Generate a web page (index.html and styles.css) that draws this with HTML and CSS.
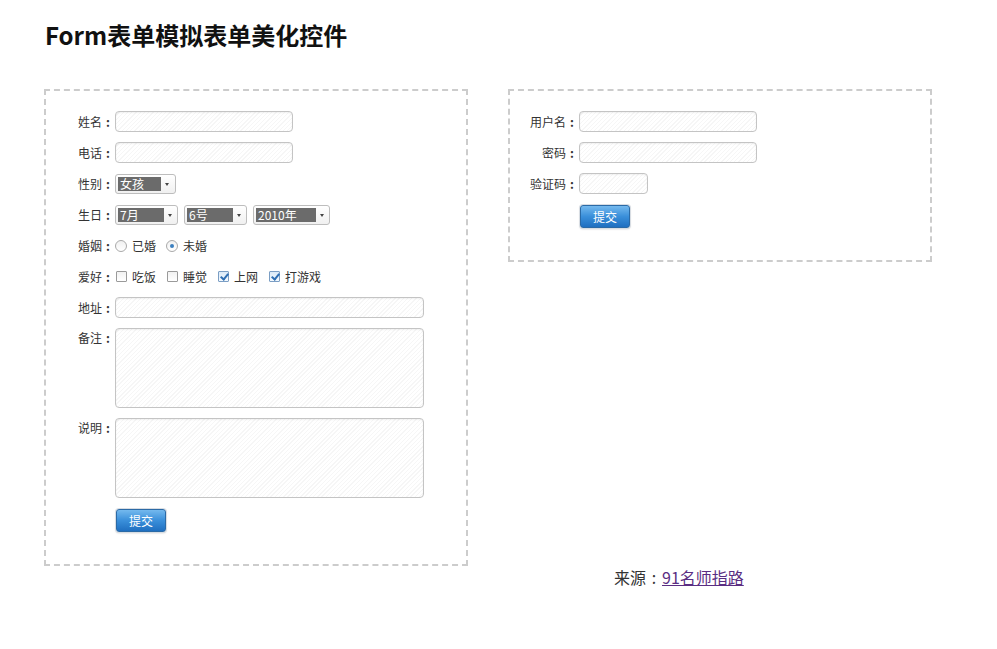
FILE: index.html
```html
<!DOCTYPE html>
<html lang="zh">
<head>
<meta charset="utf-8">
<title>Form表单模拟表单美化控件</title>
<link rel="stylesheet" href="styles.css">
</head>
<body>
<div class="page">
  <h1 class="title">Form表单模拟表单美化控件</h1>
  <div class="boxes">
    <div class="box box-left">
      <div class="row"><span class="lbl">姓名<span class="colon">:</span></span><span class="inp"></span></div>
      <div class="row"><span class="lbl">电话<span class="colon">:</span></span><span class="inp"></span></div>
      <div class="row"><span class="lbl">性别<span class="colon">:</span></span>
        <span class="sel sel-sex"><span class="sel-val">女孩</span><span class="sel-arrow"></span></span>
      </div>
      <div class="row"><span class="lbl">生日<span class="colon">:</span></span>
        <span class="sel sel-m"><span class="sel-val">7月</span><span class="sel-arrow"></span></span>
        <span class="sel sel-d"><span class="sel-val">6号</span><span class="sel-arrow"></span></span>
        <span class="sel sel-y"><span class="sel-val">2010年</span><span class="sel-arrow"></span></span>
      </div>
      <div class="row"><span class="lbl">婚姻<span class="colon">:</span></span>
        <span class="opt"><span class="radio"></span>已婚</span>
        <span class="opt"><span class="radio on"></span>未婚</span>
      </div>
      <div class="row"><span class="lbl">爱好<span class="colon">:</span></span>
        <span class="opt"><span class="chk"></span>吃饭</span>
        <span class="opt"><span class="chk"></span>睡觉</span>
        <span class="opt"><span class="chk on"></span>上网</span>
        <span class="opt"><span class="chk on"></span>打游戏</span>
      </div>
      <div class="row"><span class="lbl">地址<span class="colon">:</span></span><span class="inp inp-wide"></span></div>
      <div class="row row-top"><span class="lbl">备注<span class="colon">:</span></span><span class="inp area"></span></div>
      <div class="row row-top"><span class="lbl">说明<span class="colon">:</span></span><span class="inp area"></span></div>
      <div class="row row-btn"><span class="btn">提交</span></div>
    </div>
    <div class="box box-right">
      <div class="row"><span class="lbl">用户名<span class="colon">:</span></span><span class="inp"></span></div>
      <div class="row"><span class="lbl">密码<span class="colon">:</span></span><span class="inp"></span></div>
      <div class="row"><span class="lbl">验证码<span class="colon">:</span></span><span class="inp inp-short"></span></div>
      <div class="row row-btn"><span class="btn">提交</span></div>
    </div>
  </div>
  <div class="source">来源<span class="colon colon-lg">:</span><a href="#" class="src-link">91名师指路</a></div>
</div>
</body>
</html>
```
FILE: styles.css
```css
html, body {
  margin: 0;
  padding: 0;
  background: #fff;
}
body {
  font-family: "Noto Sans CJK SC", "Noto Sans", "Liberation Sans", sans-serif;
  color: #333;
}
.page {
  padding-left: 44px;
}
.title {
  margin: 18px 0 0 1px;
  font-size: 24px;
  line-height: 34px;
  font-weight: bold;
  color: #111;
}
.boxes {
  display: flex;
  align-items: flex-start;
  gap: 40px;
  margin-top: 37px;
}
.box {
  width: 380px;
  border: 2px dashed #cccccc;
  padding: 20px 20px 32px 20px;
}
.row {
  display: flex;
  align-items: center;
  height: 21px;
  margin-bottom: 10px;
  font-size: 12px;
}
.row-top {
  align-items: flex-start;
  height: 80px;
}
.row-btn {
  height: 23px;
  margin: 11px 0 0 50px;
}
.lbl {
  width: 48px;
  margin-right: 1px;
  text-align: right;
  line-height: 20px;
  color: #333;
  white-space: nowrap;
}
.colon {
  display: inline-block;
  width: 12px;
  text-align: center;
  font-weight: bold;
}
.colon-lg {
  width: 16px;
  font-weight: normal;
}
.inp {
  display: block;
  box-sizing: border-box;
  width: 178px;
  height: 21px;
  border: 1px solid #c4c4c4;
  border-radius: 4px;
  background: repeating-linear-gradient(135deg, #ffffff 0 2px, #f6f6f6 2px 3px);
  box-shadow: inset 0 1px 2px rgba(0,0,0,0.06);
}
.inp-wide {
  width: 309px;
}
.inp-short {
  width: 69px;
}
.area {
  width: 309px;
  height: 80px;
}
.sel {
  box-sizing: border-box;
  display: flex;
  align-items: center;
  height: 20px;
  padding: 2px;
  border: 1px solid #bdbdbd;
  border-radius: 3px;
  background: linear-gradient(#ffffff, #f0f0f0);
  margin-right: 6px;
}
.sel-val {
  display: block;
  height: 14px;
  line-height: 14px;
  background: #6b6b6b;
  color: #fff;
  font-size: 12px;
  padding-left: 2px;
}
.sel-arrow {
  flex: 1;
  height: 14px;
  position: relative;
}
.sel-arrow::after {
  content: "";
  position: absolute;
  left: 50%;
  top: 6px;
  margin-left: -2px;
  border-left: 2px solid transparent;
  border-right: 2px solid transparent;
  border-top: 3px solid #444;
}
.sel-sex { width: 61px; }
.sel-sex .sel-val { width: 41px; }
.sel-m { width: 63px; }
.sel-m .sel-val { width: 44px; }
.sel-d { width: 63px; }
.sel-d .sel-val { width: 44px; }
.sel-y { width: 77px; }
.sel-y .sel-val { width: 58px; }
.opt {
  display: flex;
  align-items: center;
  margin-right: 10px;
  color: #333;
}
.radio {
  box-sizing: border-box;
  width: 12px;
  height: 12px;
  border: 1px solid #a9a9a9;
  border-radius: 50%;
  background: linear-gradient(#f0f0f0, #ffffff);
  margin: 0 5px 0 0;
  position: relative;
}
.radio.on::after {
  content: "";
  position: absolute;
  left: 3px;
  top: 3px;
  width: 4px;
  height: 4px;
  border-radius: 50%;
  background: #3b7fbf;
}
.chk {
  box-sizing: border-box;
  width: 11px;
  height: 11px;
  border: 1px solid #9a9a9a;
  border-radius: 1px;
  background: linear-gradient(#f2f2f2, #ffffff);
  margin: 0 5px 0 1px;
  position: relative;
}
.chk.on {
  background: linear-gradient(#dbeaf8, #f4f9fe);
  border-color: #7b9ec4;
}
.chk.on::after {
  content: "";
  position: absolute;
  left: 3px;
  top: 0px;
  width: 3px;
  height: 6px;
  border-right: 2px solid #2f6fb3;
  border-bottom: 2px solid #2f6fb3;
  transform: rotate(40deg);
}
.btn {
  box-sizing: border-box;
  display: block;
  width: 50px;
  height: 23px;
  line-height: 21px;
  text-align: center;
  font-size: 12px;
  color: #fff;
  border: 1px solid #2b6aa6;
  border-radius: 3px;
  background: linear-gradient(#74b9ee, #3a8fda 50%, #1f6fc0);
  box-shadow: 0 0 0 1px #d8dde3, 0 1px 2px rgba(0,0,0,0.25);
}
.source {
  padding-left: 570px;
  font-size: 16px;
  line-height: 22px;
  color: #333;
}
.src-link {
  color: #5a2d82;
  text-decoration: underline;
}
```
